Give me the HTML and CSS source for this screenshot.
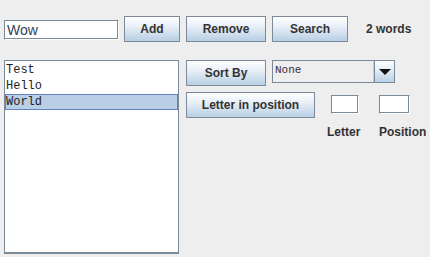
FILE: index.html
```html
<!DOCTYPE html>
<html lang="en">
<head>
    <meta charset="UTF-8">
    <title>Word List</title>
    <link rel="stylesheet" href="styles.css">
</head>
<body>
    <div class="frame">
        <div class="top-row">
            <input class="field word-field" type="text" value="Wow">
            <button class="btn btn-add">Add</button>
            <button class="btn btn-remove">Remove</button>
            <button class="btn btn-search">Search</button>
            <span class="count">2 words</span>
        </div>
        <div class="main-row">
            <ul class="word-list">
                <li>Test</li>
                <li>Hello</li>
                <li class="selected">World</li>
            </ul>
            <div class="controls">
                <div class="ctrl-row">
                    <button class="btn btn-sort">Sort By</button>
                    <div class="combo">
                        <span class="combo-value">None</span>
                        <span class="combo-arrow"></span>
                    </div>
                </div>
                <div class="ctrl-row second">
                    <button class="btn btn-letter">Letter in position</button>
                    <div class="fields">
                        <input class="field small letter-box" type="text">
                        <input class="field small pos-box" type="text">
                        <span class="lbl lbl-letter">Letter</span>
                        <span class="lbl">Position</span>
                    </div>
                </div>
            </div>
        </div>
    </div>
</body>
</html>
```

FILE: styles.css
```css
body {
    margin: 0;
    padding: 0;
    background: #eeeeee;
    font-family: 'Liberation Sans', Arial, sans-serif;
    color: #333;
    width: 430px;
    height: 257px;
    overflow: hidden;
}
.frame {
    padding: 16px 0 0 4px;
}
.top-row {
    display: flex;
    align-items: center;
    height: 26px;
}
.field {
    box-sizing: border-box;
    border: 1px solid #7a8a99;
    border-right-color: #fff;
    border-bottom-color: #fff;
    box-shadow: inset -1px -1px 0 #7a8a99;
    background: #fff;
    margin: 0;
    padding: 0 2px;
    font-family: 'Liberation Sans', Arial, sans-serif;
    font-size: 14px;
    color: #33415a;
    outline: none;
}
.word-field {
    width: 115px;
    height: 20px;
    margin-top: 2px;
}
.btn {
    box-sizing: border-box;
    height: 26px;
    margin: 0;
    padding: 0;
    border: 1px solid #7a8a99;
    background: linear-gradient(to bottom, #ffffff 0%, #eef3f9 30%, #dce7f2 55%, #b8cfe5 100%);
    font-family: 'Liberation Sans', Arial, sans-serif;
    font-weight: bold;
    font-size: 12px;
    color: #333;
}
.btn-add {
    width: 56px;
    margin-left: 5px;
}
.btn-remove {
    width: 80px;
    margin-left: 6px;
}
.btn-search {
    width: 76px;
    margin-left: 6px;
}
.count {
    margin-left: 18px;
    font-weight: bold;
    font-size: 12px;
}
.main-row {
    display: flex;
    margin-top: 18px;
}
.word-list {
    box-sizing: border-box;
    width: 175px;
    height: 194px;
    margin: 0;
    padding: 1px 0 0 0;
    list-style: none;
    background: #fff;
    border: 1px solid #7a8a99;
    border-bottom-width: 2px;
    font-family: 'Liberation Mono', 'Courier New', monospace;
    font-size: 12px;
    color: #222;
}
.word-list li {
    height: 16px;
    line-height: 16px;
    padding-left: 1px;
    box-sizing: border-box;
}
.word-list li.selected {
    background: #b8cfe5;
    border: 1px solid #6382bf;
    line-height: 14px;
    padding-left: 0;
}
.controls {
    margin-left: 7px;
}
.ctrl-row {
    display: flex;
    align-items: flex-start;
}
.ctrl-row.second {
    margin-top: 6px;
}
.btn-sort {
    width: 80px;
}
.combo {
    box-sizing: border-box;
    display: flex;
    width: 123px;
    height: 23px;
    margin-left: 6px;
    border: 1px solid #7a8a99;
    background: #eeeeee;
}
.combo-value {
    flex: 1;
    box-sizing: border-box;
    border-right: 1px solid #b8cfe5;
    padding: 3px 0 0 2px;
    font-family: 'Liberation Mono', 'Courier New', monospace;
    font-size: 11px;
    color: #3a2b3a;
}
.combo-arrow {
    position: relative;
    width: 19px;
    border-left: 1px solid #7a8a99;
    background: linear-gradient(to bottom, #ffffff 0%, #e6eef6 40%, #b8cfe5 100%);
}
.combo-arrow::after {
    content: "";
    position: absolute;
    left: 4px;
    top: 8px;
    border-left: 6px solid transparent;
    border-right: 6px solid transparent;
    border-top: 6px solid #111;
}
.btn-letter {
    width: 129px;
}
.fields {
    display: grid;
    grid-template-columns: 34px auto;
    column-gap: 18px;
    row-gap: 11px;
    margin-left: 12px;
    margin-top: 3px;
}
.field.small {
    height: 19px;
    padding: 0;
}
.letter-box {
    width: 28px;
    justify-self: center;
    margin-left: 2px;
}
.pos-box {
    width: 31px;
}
.lbl {
    font-weight: bold;
    font-size: 12px;
    line-height: 15px;
}
```
